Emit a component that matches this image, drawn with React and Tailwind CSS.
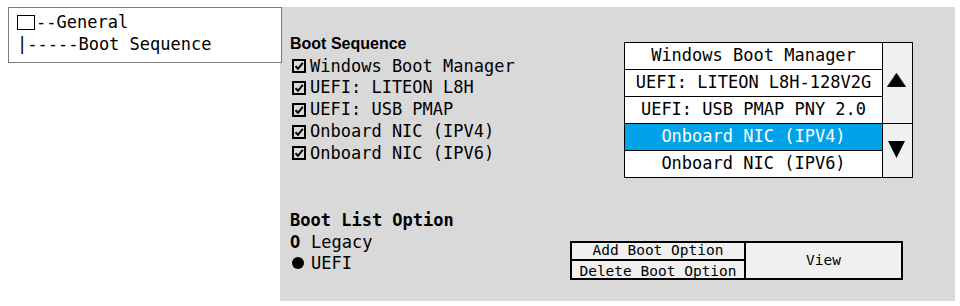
import React from "react";

const mono = "font-['DejaVu_Sans_Mono',monospace]";

const checked = [
  "Windows Boot Manager",
  "UEFI: LITEON L8H",
  "UEFI: USB PMAP",
  "Onboard NIC (IPV4)",
  "Onboard NIC (IPV6)",
];

const order = [
  "Windows Boot Manager",
  "UEFI: LITEON L8H-128V2G",
  "UEFI: USB PMAP PNY 2.0",
  "Onboard NIC (IPV4)",
  "Onboard NIC (IPV6)",
];

function CheckBox() {
  return (
    <svg width="14" height="14" viewBox="0 0 14 14" className="ml-[2px] mr-[4px] shrink-0">
      <rect x="1" y="1" width="12" height="12" fill="none" stroke="#000" strokeWidth="2" />
      <path d="M3.5 7.2 L6 9.8 L10.8 3.8" fill="none" stroke="#000" strokeWidth="2" />
    </svg>
  );
}

export default function App() {
  return (
    <div className={`flex h-[306px] w-[960px] bg-white text-black ${mono}`}>
      {/* tree */}
      <div className="w-[280px] shrink-0 pl-2 pt-[7px]">
        <div className="relative z-10 h-[56px] w-[274px] border border-[#7a7a7a] bg-white pl-[8px] pt-[3px] text-[17px] leading-[22px]">
          <div className="flex items-center">
            <span className="mr-px inline-block h-[15px] w-[18px] border border-black" />
            <span>--General</span>
          </div>
          <div className="whitespace-pre">|-----Boot Sequence</div>
        </div>
      </div>

      {/* settings panel */}
      <div className="mt-[7px] flex h-[294px] w-[675px] flex-col bg-[#d9d9d9] pl-[10px] pt-[26px]">
        <div className="flex">
          <div className="w-[334px] shrink-0">
            <div className="font-['Liberation_Sans',Arial,sans-serif] text-[16px] font-bold leading-[22px]">
              Boot Sequence
            </div>
            {checked.map((item) => (
              <div key={item} className="flex h-[21.75px] items-center pt-px text-[17px]">
                <CheckBox />
                <span className="whitespace-pre">{item}</span>
              </div>
            ))}
          </div>

          <div className="mt-[9px] flex h-[136px] w-[289px] border border-black bg-white">
            <div className="flex w-[257px] flex-col">
              {order.map((item, i) => (
                <div
                  key={item}
                  className={`flex h-[26px] items-center justify-center whitespace-pre text-[17px] ${
                    i > 0 ? "h-[27px] border-t border-black" : ""
                  } ${i === 3 ? "bg-[#00a2e8] text-white" : ""}`}
                >
                  {item}
                </div>
              ))}
            </div>
            <div className="flex flex-1 flex-col border-l border-black bg-[#f0f0f0]">
              <div className="flex h-[81px] items-center justify-center border-b border-black pb-[7px] pr-[2px]">
                <svg width="19" height="14" viewBox="0 0 19 14">
                  <path d="M9.5 0 L19 14 L0 14 Z" fill="#000" stroke="#1f3b5a" strokeWidth="0.6" />
                </svg>
              </div>
              <div className="flex flex-1 items-center justify-center pb-[3px] pr-[2px]">
                <svg width="17" height="17" viewBox="0 0 17 17">
                  <path d="M0 0 L17 0 L8.5 17 Z" fill="#000" />
                </svg>
              </div>
            </div>
          </div>
        </div>

        <div className="mt-[29px] flex">
          <div className="w-[280px] shrink-0 pt-[2px] text-[17px] leading-[22px]">
            <div className="font-bold">Boot List Option</div>
            <div className="flex items-center">
              <span className="w-[21px] font-bold">O</span>
              <span>Legacy</span>
            </div>
            <div className="-mt-px flex items-center">
              <span className="w-[21px]">
                <span className="ml-[2px] block h-[12px] w-[12px] rounded-full bg-black" />
              </span>
              <span>UEFI</span>
            </div>
          </div>

          <div className="mt-[34px] flex h-[39px] w-[333px] border-2 border-black bg-[#f0f0f0] text-[14.5px]">
            <div className="flex w-[174px] flex-col border-r-2 border-black">
              <div className="flex h-[18px] items-center justify-center border-b-2 border-black">
                Add Boot Option
              </div>
              <div className="flex flex-1 items-center justify-center">Delete Boot Option</div>
            </div>
            <div className="flex flex-1 items-center justify-center">View</div>
          </div>
        </div>
      </div>
    </div>
  );
}
